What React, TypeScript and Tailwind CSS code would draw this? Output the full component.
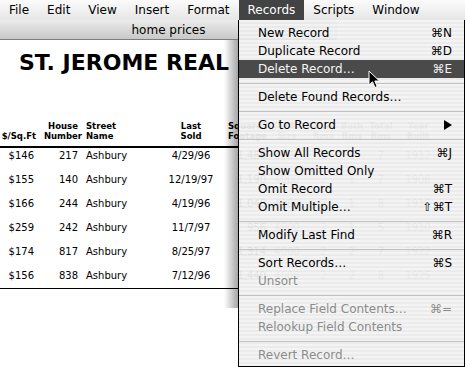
import React from "react";

type Item = { label: string; key?: string; disabled?: boolean; active?: boolean; submenu?: boolean };

const menuGroups: Item[][] = [
  [
    { label: "New Record", key: "⌘N" },
    { label: "Duplicate Record", key: "⌘D" },
    { label: "Delete Record…", key: "⌘E", active: true },
  ],
  [{ label: "Delete Found Records…" }],
  [{ label: "Go to Record", submenu: true }],
  [
    { label: "Show All Records", key: "⌘J" },
    { label: "Show Omitted Only" },
    { label: "Omit Record", key: "⌘T" },
    { label: "Omit Multiple…", key: "⇧⌘T" },
  ],
  [{ label: "Modify Last Find", key: "⌘R" }],
  [
    { label: "Sort Records…", key: "⌘S" },
    { label: "Unsort", disabled: true },
  ],
  [
    { label: "Replace Field Contents…", key: "⌘=", disabled: true },
    { label: "Relookup Field Contents", disabled: true },
  ],
  [{ label: "Revert Record…", disabled: true }],
];

const rows = [
  ["$146", "217", "Ashbury", "4/29/96", "1,486", "4000", "3", "1", "7", "1912"],
  ["$155", "140", "Ashbury", "12/19/97", "1,190", "4000", "2", "1", "7", "1908"],
  ["$166", "244", "Ashbury", "4/19/96", "1,048", "4000", "2", "1", "8", "1915"],
  ["$259", "242", "Ashbury", "11/7/97", "956", "4000", "2", "1", "5", "1910"],
  ["$174", "817", "Ashbury", "8/25/97", "1,314", "4000", "2", "2", "7", "1922"],
  ["$156", "838", "Ashbury", "7/12/96", "1,440", "4000", "2", "2", "8", "1925"],
];

const menuBar = ["File", "Edit", "View", "Insert", "Format", "Records", "Scripts", "Window"];

const Head = ({ a, b, className }: { a?: string; b: string; className: string }) => (
  <div className={`flex flex-col justify-end h-[20px] text-[8.5px] leading-[10px] font-bold whitespace-nowrap ${className}`}>
    {a && <span>{a}</span>}
    <span>{b}</span>
  </div>
);

const App = () => {
  return (
    <div className="relative w-[465px] h-[367px] overflow-hidden bg-white text-black font-['DejaVu_Sans',sans-serif]">
      {/* menu bar */}
      <div className="flex h-[20px] items-stretch bg-linear-to-b from-[#fbfbfb] to-[#e6e6e6] text-[12px]">
        {menuBar.map((m) => (
          <div
            key={m}
            className={`flex items-center px-[9px] ${m === "Records" ? "bg-[#434343] text-white" : ""}`}
          >
            {m}
          </div>
        ))}
      </div>

      {/* window */}
      <div className="relative">
        <div className="flex h-[20px] w-[337px] items-center justify-center bg-linear-to-b from-[#ebebeb] to-[#c8c8c8] border-b border-[#7d7d7d] text-[12px] leading-[12px]">
          home prices
        </div>
        <h1 className="mt-[12px] pl-[19px] text-[22px] leading-[22px] font-bold whitespace-nowrap">
          ST. JEROME REAL
        </h1>

        <div className="mt-[47px] flex pb-[5px]">
          <Head b="$/Sq.Ft" className="w-[40px] text-right pr-[4px] items-end" />
          <Head a="House" b="Number" className="w-[46px] items-center" />
          <Head a="Street" b="Name" className="w-[60px] items-start" />
          <Head a="Last" b="Sold" className="w-[82px] pl-[8px] items-center" />
          <Head a="Square" b="Footage" className="w-[40px] items-start" />
          <Head a="Lot" b="Size" className="w-[38px] items-center text-[#666]" />
          <Head a="Bed" b="Rms" className="w-[35px] items-center text-[#666]" />
          <Head a="Bath" b="Rms" className="w-[22px] items-center text-[#666]" />
          <Head a="Total" b="Rms" className="w-[36px] items-center text-[#666]" />
          <Head a="Year" b="Built" className="w-[38px] items-center text-[#666]" />
        </div>
        <div className="w-[238px] h-[2px] bg-black" />

        <div className="flex flex-col text-[10px] leading-[16px]">
          {rows.map((r, i) => (
            <div key={i} className={`flex ${i === rows.length - 1 ? "h-[20px]" : "h-[24px]"}`}>
              <span className="w-[40px] text-right pr-[6px]">{r[0]}</span>
              <span className="w-[46px] text-right pr-[8px]">{r[1]}</span>
              <span className="w-[60px]">{r[2]}</span>
              <span className="w-[82px] pl-[8px] text-center">{r[3]}</span>
              <span className="w-[40px] text-right pr-[2px]">{r[4]}</span>
              <span className="w-[38px] text-center text-[#666]">{r[5]}</span>
              <span className="w-[35px] text-center text-[#666]">{r[6]}</span>
              <span className="w-[22px] text-center text-[#666]">{r[7]}</span>
              <span className="w-[36px] text-center text-[#666]">{r[8]}</span>
              <span className="w-[38px] text-center text-[#666]">{r[9]}</span>
            </div>
          ))}
        </div>
        <div className="w-[238px] h-px bg-black" />

        {/* window edge shade next to the menu */}
        <div className="absolute left-[224px] top-[20px] w-[14px] h-[268px] bg-linear-to-r from-transparent to-black/35" />
      </div>

      {/* Records menu */}
      <div className="absolute left-[238px] top-[20px] w-[227px] h-[347px] border-x border-b border-black bg-[image:repeating-linear-gradient(180deg,rgba(243,243,243,0.94)_0px,rgba(243,243,243,0.94)_2px,rgba(234,234,234,0.94)_2px,rgba(234,234,234,0.94)_4px)] pt-[4px] text-[12px]">
        {menuGroups.map((group, gi) => (
          <React.Fragment key={gi}>
            {gi > 0 && (
              <div className="flex h-[10px] items-center">
                <div className="h-px w-full bg-[#c2c2c2]" />
              </div>
            )}
            {group.map((it) => (
              <div
                key={it.label}
                className={`flex h-[18px] items-center justify-between pl-[19px] pr-[12px] whitespace-nowrap ${
                  it.active ? "bg-[#4a4a4a] text-[#f4f4f4]" : it.disabled ? "text-[#8c8c8c]" : ""
                }`}
              >
                <span>{it.label}</span>
                {it.key && <span>{it.key}</span>}
                {it.submenu && (
                  <svg width="8" height="10" viewBox="0 0 8 10">
                    <polygon points="0,0 8,5 0,10" fill="#000" />
                  </svg>
                )}
              </div>
            ))}
          </React.Fragment>
        ))}
      </div>

      {/* mouse pointer */}
      <svg className="absolute left-[368px] top-[70px]" width="13" height="19" viewBox="0 0 13 19">
        <path d="M1 1 L1 15 L4.5 11.8 L7 17.5 L9.2 16.5 L6.8 11 L11.5 11 Z" fill="#000" stroke="#fff" strokeWidth="1" />
      </svg>
    </div>
  );
};

export default App;
